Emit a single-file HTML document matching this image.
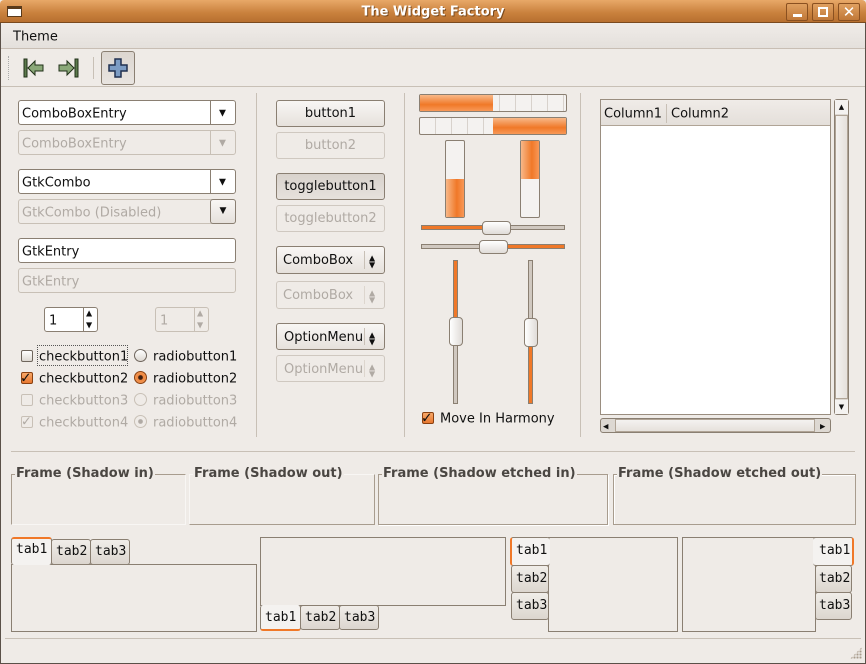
<!DOCTYPE html>
<html><head><meta charset="utf-8"><style>
*{box-sizing:border-box;margin:0;padding:0}
body{width:866px;height:664px;background:#efebe7;font-family:"DejaVu Sans","Liberation Sans",sans-serif;font-size:13px;color:#101010;position:relative;overflow:hidden}
.a{position:absolute}
.t{position:absolute;white-space:nowrap;line-height:16px;transform:translateY(1.5px)}
.dis{color:#b0aaa4}
.entry{position:absolute;background:#fff;border:1px solid #8a7f72;border-radius:3px}
.entry.d{background:#efebe7;border-color:#c8c0b6}
.btn{position:absolute;border:1px solid #8a7f72;border-radius:3px;background:linear-gradient(#f8f6f4,#e6e1dc);text-align:center;line-height:26px}
.btn.d{border-color:#cfc8c0;color:#b0aaa4;background:#efebe7}
.sep{position:absolute;background:#c8c0b6}
.frame{position:absolute;border:1px solid #a89c8e}
.fl{position:absolute;font-weight:bold;color:#4a4642;background:#efebe7;padding:0 1px;line-height:16px;white-space:nowrap}
.tab{position:absolute;border:1px solid #8a7f72;background:linear-gradient(#f0ede9,#dcd6cf);font-family:"DejaVu Sans Mono","Liberation Mono",monospace;font-size:13px;line-height:24px;padding-left:4px;border-radius:3px}
.box{position:absolute;border:1px solid #8a7f72;background:#efebe7}
.cb{position:absolute;width:12px;height:12px;border:1px solid #6e655c;background:linear-gradient(#fff,#ddd8d2);border-radius:2px}
.rb{position:absolute;width:13px;height:13px;border:1px solid #6e655c;background:linear-gradient(#fff,#ddd8d2);border-radius:50%}
</style></head><body>
<div class="a" style="left:0;top:0;width:866px;height:23px;background:linear-gradient(#e8a868,#c8803c 60%,#b87030);border-bottom:1px solid #7a4a1e;border-radius:4px 4px 0 0"></div>
<div class="a" style="left:7px;top:6px;width:15px;height:11px;background:#fff;border:1px solid #5a3a1a;border-top-width:3px"></div>
<div class="t" style="left:0;width:866px;text-align:center;top:3px;color:#fff;font-weight:bold;font-size:13px;text-shadow:1px 1px 0 #7a4a1e">The Widget Factory</div>
<div class="a" style="left:786px;top:3px;width:22px;height:18px;border:1px solid #8a5020;border-radius:2px;background:linear-gradient(#e0a060,#c07838)"><div class="a" style="left:6px;top:10px;width:9px;height:3px;background:#fff"></div></div>
<div class="a" style="left:812px;top:3px;width:22px;height:18px;border:1px solid #8a5020;border-radius:2px;background:linear-gradient(#e0a060,#c07838)"><div class="a" style="left:5px;top:3px;width:10px;height:10px;border:2px solid #fff"></div></div>
<div class="a" style="left:838px;top:3px;width:22px;height:18px;border:1px solid #8a5020;border-radius:2px;background:linear-gradient(#e0a060,#c07838);color:#fff;font-weight:bold;text-align:center;line-height:16px;font-size:15px">✕</div>
<div class="a" style="left:0;top:23px;width:1px;height:641px;background:#5a5048"></div>
<div class="a" style="right:0;top:23px;width:1px;height:641px;background:#5a5048"></div>
<div class="a" style="left:0;bottom:0;width:866px;height:1px;background:#5a5048"></div>
<div class="a" style="left:1px;top:23px;width:864px;height:26px;background:linear-gradient(#f0ece8,#e4e0dc);border-bottom:1px solid #c8beb4"></div>
<div class="t" style="left:13px;top:28px">Theme</div>
<div class="a" style="left:8px;top:56px;width:2px;height:24px;border-left:1px dotted #aaa"></div>
<svg class="a" style="left:22px;top:57px" width="24" height="22"><rect x="2" y="2" width="3" height="18" fill="#5c7a4c" stroke="#203018"/><path d="M6 11 L13 4 L13 8 L21 8 L21 14 L13 14 L13 18 Z" fill="#8aa878" stroke="#203018"/></svg>
<svg class="a" style="left:57px;top:57px" width="24" height="22"><rect x="18" y="2" width="3" height="18" fill="#5c7a4c" stroke="#203018"/><path d="M17 11 L10 4 L10 8 L2 8 L2 14 L10 14 L10 18 Z" fill="#8aa878" stroke="#203018"/></svg>
<div class="sep" style="left:93px;top:57px;width:1px;height:22px"></div>
<div class="a" style="left:101px;top:51px;width:34px;height:34px;border:1px solid #8a7f72;border-radius:3px;background:linear-gradient(#dcd6d0,#e8e4e0)"></div>
<svg class="a" style="left:107px;top:57px" width="22" height="22"><path d="M8 2h6v6h6v6h-6v6h-6v-6h-6v-6h6z" fill="#7c9cc4" stroke="#203050" stroke-width="1.5"/></svg>
<div class="sep" style="left:1px;top:86px;width:864px;height:1px"></div>
<div class="entry" style="left:18px;top:100px;width:218px;height:25px"></div>
<div class="t" style="left:22px;top:105px">ComboBoxEntry</div>
<div class="a" style="left:210px;top:101px;width:1px;height:23px;background:#8a7f72"></div>
<div class="t" style="left:219px;top:104px;font-size:9px">▼</div>
<div class="entry d" style="left:18px;top:130px;width:218px;height:25px"></div>
<div class="t dis" style="left:22px;top:135px">ComboBoxEntry</div>
<div class="a" style="left:210px;top:131px;width:1px;height:23px;background:#c8c0b6"></div>
<div class="t dis" style="left:219px;top:134px;font-size:9px">▼</div>
<div class="entry" style="left:18px;top:169px;width:218px;height:25px"></div>
<div class="t" style="left:22px;top:174px">GtkCombo</div>
<div class="a" style="left:210px;top:170px;width:1px;height:23px;background:#8a7f72"></div>
<div class="t" style="left:219px;top:173px;font-size:9px">▼</div>
<div class="entry d" style="left:18px;top:199px;width:218px;height:25px"></div>
<div class="t dis" style="left:22px;top:204px">GtkCombo (Disabled)</div>
<div class="btn" style="left:210px;top:199px;width:26px;height:25px;font-size:9px;line-height:22px">▼</div>
<div class="entry" style="left:18px;top:238px;width:218px;height:25px"></div>
<div class="t" style="left:22px;top:243px">GtkEntry</div>
<div class="entry d" style="left:18px;top:268px;width:218px;height:25px"></div>
<div class="t dis" style="left:22px;top:273px">GtkEntry</div>
<div class="entry" style="left:44px;top:307px;width:54px;height:25px"></div>
<div class="t" style="left:49px;top:312px">1</div>
<div class="a" style="left:83px;top:308px;width:1px;height:23px;background:#8a7f72"></div>
<div class="t" style="left:86px;top:306px;font-size:8px;line-height:12px">▲<br>▼</div>
<div class="entry d" style="left:155px;top:307px;width:54px;height:25px"></div>
<div class="t dis" style="left:160px;top:312px">1</div>
<div class="a" style="left:194px;top:308px;width:1px;height:23px;background:#c8c0b6"></div>
<div class="t dis" style="left:197px;top:306px;font-size:8px;line-height:12px">▲<br>▼</div>
<div class="cb" style="left:21px;top:350px"></div>
<div class="a" style="left:37px;top:345px;width:91px;height:21px;border:1px dotted #555"></div>
<div class="t" style="left:39px;top:348px">checkbutton1</div>
<div class="cb" style="left:21px;top:372px;background:linear-gradient(#f8a868,#e87830);border-color:#8a4010"></div>
<div class="t" style="left:20px;top:369px;font-size:14px;font-weight:bold">✓</div>
<div class="t" style="left:39px;top:370px">checkbutton2</div>
<div class="cb" style="left:21px;top:394px;border-color:#c8c0b6;background:#efebe7"></div>
<div class="t dis" style="left:39px;top:392px">checkbutton3</div>
<div class="cb" style="left:21px;top:416px;border-color:#c8c0b6;background:#efebe7"></div>
<div class="t dis" style="left:21px;top:413px">✓</div>
<div class="t dis" style="left:39px;top:414px">checkbutton4</div>
<div class="rb" style="left:134px;top:349px"></div>
<div class="t" style="left:153px;top:348px">radiobutton1</div>
<div class="rb" style="left:134px;top:371px;background:radial-gradient(#402010 25%,#f08840 35%,#f0a060);border-color:#8a4010"></div>
<div class="t" style="left:153px;top:370px">radiobutton2</div>
<div class="rb" style="left:134px;top:393px;border-color:#c8c0b6;background:#efebe7"></div>
<div class="t dis" style="left:153px;top:392px">radiobutton3</div>
<div class="rb" style="left:134px;top:415px;border-color:#c8c0b6;background:radial-gradient(#b0aaa4 25%,#efebe7 35%)"></div>
<div class="t dis" style="left:153px;top:414px">radiobutton4</div>
<div class="sep" style="left:256px;top:93px;width:1px;height:344px"></div>
<div class="btn" style="left:276px;top:100px;width:109px;height:27px">button1</div>
<div class="btn d" style="left:276px;top:132px;width:109px;height:27px">button2</div>
<div class="btn" style="left:276px;top:173px;width:109px;height:27px;background:linear-gradient(#d8d2cc,#e6e1dc)">togglebutton1</div>
<div class="btn d" style="left:276px;top:205px;width:109px;height:27px">togglebutton2</div>
<div class="btn" style="left:276px;top:246px;width:109px;height:28px;text-align:left;padding-left:6px;line-height:28px">ComboBox</div>
<div class="a" style="left:364px;top:251px;width:1px;height:18px;background:#c8c0b6"></div>
<div class="t" style="left:369px;top:253px;font-size:8px;line-height:7px">▲<br>▼</div>
<div class="btn d" style="left:276px;top:281px;width:109px;height:28px;text-align:left;padding-left:6px;line-height:28px">ComboBox</div>
<div class="a" style="left:364px;top:286px;width:1px;height:18px;background:#ddd6ce"></div>
<div class="t dis" style="left:369px;top:288px;font-size:8px;line-height:7px">▲<br>▼</div>
<div class="btn" style="left:276px;top:323px;width:109px;height:27px;text-align:left;padding-left:7px;line-height:27px">OptionMenu</div>
<div class="a" style="left:364px;top:328px;width:1px;height:17px;background:#c8c0b6"></div>
<div class="t" style="left:369px;top:330px;font-size:8px;line-height:7px">▲<br>▼</div>
<div class="btn d" style="left:276px;top:355px;width:109px;height:27px;text-align:left;padding-left:7px;line-height:27px">OptionMenu</div>
<div class="a" style="left:364px;top:360px;width:1px;height:17px;background:#ddd6ce"></div>
<div class="t dis" style="left:369px;top:362px;font-size:8px;line-height:7px">▲<br>▼</div>
<div class="sep" style="left:404px;top:93px;width:1px;height:344px"></div>
<div class="a" style="left:419px;top:94px;width:148px;height:18px;border:1px solid #8a7f72;border-radius:2px;background:repeating-linear-gradient(90deg,#f4f2f0 0 15px,#d8d2cc 15px 16px)"><div class="a" style="left:0;top:0;width:73px;height:16px;background:linear-gradient(#f8b888,#f07828 60%,#f89858)"></div></div>
<div class="a" style="left:419px;top:117px;width:148px;height:18px;border:1px solid #8a7f72;border-radius:2px;background:repeating-linear-gradient(90deg,#f4f2f0 0 15px,#d8d2cc 15px 16px)"><div class="a" style="right:0;top:0;width:73px;height:16px;background:linear-gradient(#f8b888,#f07828 60%,#f89858)"></div></div>
<div class="a" style="left:445px;top:140px;width:20px;height:78px;border:1px solid #8a7f72;border-radius:2px;background:#f4f2f0"><div class="a" style="left:0;bottom:0;width:18px;height:38px;background:linear-gradient(90deg,#f8b888,#f07828 60%,#f89858)"></div></div>
<div class="a" style="left:520px;top:140px;width:20px;height:78px;border:1px solid #8a7f72;border-radius:2px;background:#f4f2f0"><div class="a" style="left:0;top:0;width:18px;height:38px;background:linear-gradient(90deg,#f8b888,#f07828 60%,#f89858)"></div></div>
<div class="a" style="left:421px;top:225px;width:144px;height:5px;border:1px solid #8a7f72;background:#d0c8c0"><div class="a" style="left:0;top:0;width:64px;height:3px;background:#f07828"></div></div>
<div class="a" style="left:482px;top:221px;width:29px;height:14px;border:1px solid #8a7f72;border-radius:4px;background:linear-gradient(#fff,#e0dcd8)"></div>
<div class="a" style="left:421px;top:244px;width:144px;height:5px;border:1px solid #8a7f72;background:#d0c8c0"><div class="a" style="right:0;top:0;width:60px;height:3px;background:#f07828"></div></div>
<div class="a" style="left:479px;top:240px;width:29px;height:14px;border:1px solid #8a7f72;border-radius:4px;background:linear-gradient(#fff,#e0dcd8)"></div>
<div class="a" style="left:453px;top:260px;width:5px;height:144px;border:1px solid #8a7f72;background:#d0c8c0"><div class="a" style="left:0;top:0;width:3px;height:60px;background:#f07828"></div></div>
<div class="a" style="left:449px;top:317px;width:14px;height:29px;border:1px solid #8a7f72;border-radius:4px;background:linear-gradient(90deg,#fff,#e0dcd8)"></div>
<div class="a" style="left:528px;top:260px;width:5px;height:144px;border:1px solid #8a7f72;background:#d0c8c0"><div class="a" style="left:0;bottom:0;width:3px;height:58px;background:#f07828"></div></div>
<div class="a" style="left:524px;top:318px;width:14px;height:29px;border:1px solid #8a7f72;border-radius:4px;background:linear-gradient(90deg,#fff,#e0dcd8)"></div>
<div class="cb" style="left:422px;top:412px;background:linear-gradient(#f8a868,#e87830);border-color:#8a4010"></div>
<div class="t" style="left:421px;top:409px;font-size:14px;font-weight:bold">✓</div>
<div class="t" style="left:440px;top:410px">Move In Harmony</div>
<div class="sep" style="left:580px;top:93px;width:1px;height:344px"></div>
<div class="a" style="left:600px;top:99px;width:231px;height:316px;border:1px solid #9a8e80;background:#fff"></div>
<div class="a" style="left:601px;top:100px;width:229px;height:26px;background:linear-gradient(#f0ece8,#e4dfda);border-bottom:1px solid #b0a496"></div>
<div class="a" style="left:666px;top:104px;width:1px;height:19px;background:#c8c0b6"></div>
<div class="t" style="left:604px;top:105px">Column1</div>
<div class="t" style="left:671px;top:105px">Column2</div>
<div class="a" style="left:834px;top:99px;width:15px;height:316px;border:1px solid #8a7f72;border-radius:3px;background:#ddd8d2"></div>
<div class="a" style="left:835px;top:100px;width:13px;height:14px;background:#f4f2f0;font-size:7px;text-align:center;line-height:14px">▲</div>
<div class="a" style="left:835px;top:115px;width:13px;height:284px;background:linear-gradient(90deg,#f4f2f0,#e6e1dc);border:1px solid #b0a496"></div>
<div class="a" style="left:835px;top:400px;width:13px;height:14px;background:#f4f2f0;font-size:7px;text-align:center;line-height:14px">▼</div>
<div class="a" style="left:600px;top:418px;width:231px;height:15px;border:1px solid #8a7f72;border-radius:3px;background:#ddd8d2"></div>
<div class="a" style="left:615px;top:419px;width:200px;height:13px;background:linear-gradient(#f4f2f0,#e6e1dc);border:1px solid #b0a496"></div>
<div class="t" style="left:603px;top:417px;font-size:7px">◀</div>
<div class="t" style="left:820px;top:417px;font-size:7px">▶</div>
<div class="sep" style="left:11px;top:451px;width:844px;height:1px"></div>
<div class="frame" style="left:11px;top:474px;width:175px;height:51px;border-color:#a89c8e #f8f6f4 #f8f6f4 #a89c8e"></div>
<div class="fl" style="left:15px;top:466px">Frame (Shadow in)</div>
<div class="frame" style="left:189px;top:474px;width:186px;height:51px;border-color:#f8f6f4 #a89c8e #a89c8e #f8f6f4"></div>
<div class="fl" style="left:193px;top:466px">Frame (Shadow out)</div>
<div class="frame" style="left:378px;top:474px;width:230px;height:51px;box-shadow:1px 1px 0 #fff"></div>
<div class="fl" style="left:382px;top:466px">Frame (Shadow etched in)</div>
<div class="frame" style="left:613px;top:474px;width:243px;height:51px;box-shadow:inset 1px 1px 0 #fff"></div>
<div class="fl" style="left:617px;top:466px">Frame (Shadow etched out)</div>
<div class="box" style="left:11px;top:564px;width:246px;height:68px"></div>
<div class="tab" style="left:51px;top:539px;width:40px;height:26px">tab2</div>
<div class="tab" style="left:90px;top:539px;width:40px;height:26px">tab3</div>
<div class="tab" style="left:11px;top:537px;width:41px;height:28px;background:#f4f2f0;border-bottom:none;border-top:2px solid #f07828;line-height:22px">tab1</div>
<div class="box" style="left:260px;top:537px;width:246px;height:69px"></div>
<div class="tab" style="left:300px;top:605px;width:40px;height:25px">tab2</div>
<div class="tab" style="left:339px;top:605px;width:40px;height:25px">tab3</div>
<div class="tab" style="left:260px;top:605px;width:41px;height:26px;background:#f4f2f0;border-top:none;border-bottom:2px solid #f07828;line-height:26px">tab1</div>
<div class="box" style="left:548px;top:537px;width:130px;height:95px"></div>
<div class="tab" style="left:511px;top:565px;width:38px;height:28px;line-height:26px">tab2</div>
<div class="tab" style="left:511px;top:592px;width:38px;height:28px;line-height:26px">tab3</div>
<div class="tab" style="left:510px;top:537px;width:40px;height:29px;background:#f4f2f0;border-right:none;border-left:2px solid #f07828;line-height:26px">tab1</div>
<div class="box" style="left:682px;top:537px;width:134px;height:95px"></div>
<div class="tab" style="left:815px;top:565px;width:37px;height:28px;line-height:26px;padding-left:3px">tab2</div>
<div class="tab" style="left:815px;top:592px;width:37px;height:28px;line-height:26px;padding-left:3px">tab3</div>
<div class="tab" style="left:813px;top:537px;width:41px;height:29px;background:#f4f2f0;border-left:none;border-right:2px solid #f07828;line-height:26px;padding-left:6px">tab1</div>
<div class="sep" style="left:5px;top:638px;width:856px;height:1px"></div>
<div class="a" style="left:850px;top:647px;width:12px;height:12px;background:radial-gradient(circle,#a89c8e 1px,transparent 1.2px) 0 0/3px 3px;clip-path:polygon(100% 0,100% 100%,0 100%)"></div>
</body></html>
